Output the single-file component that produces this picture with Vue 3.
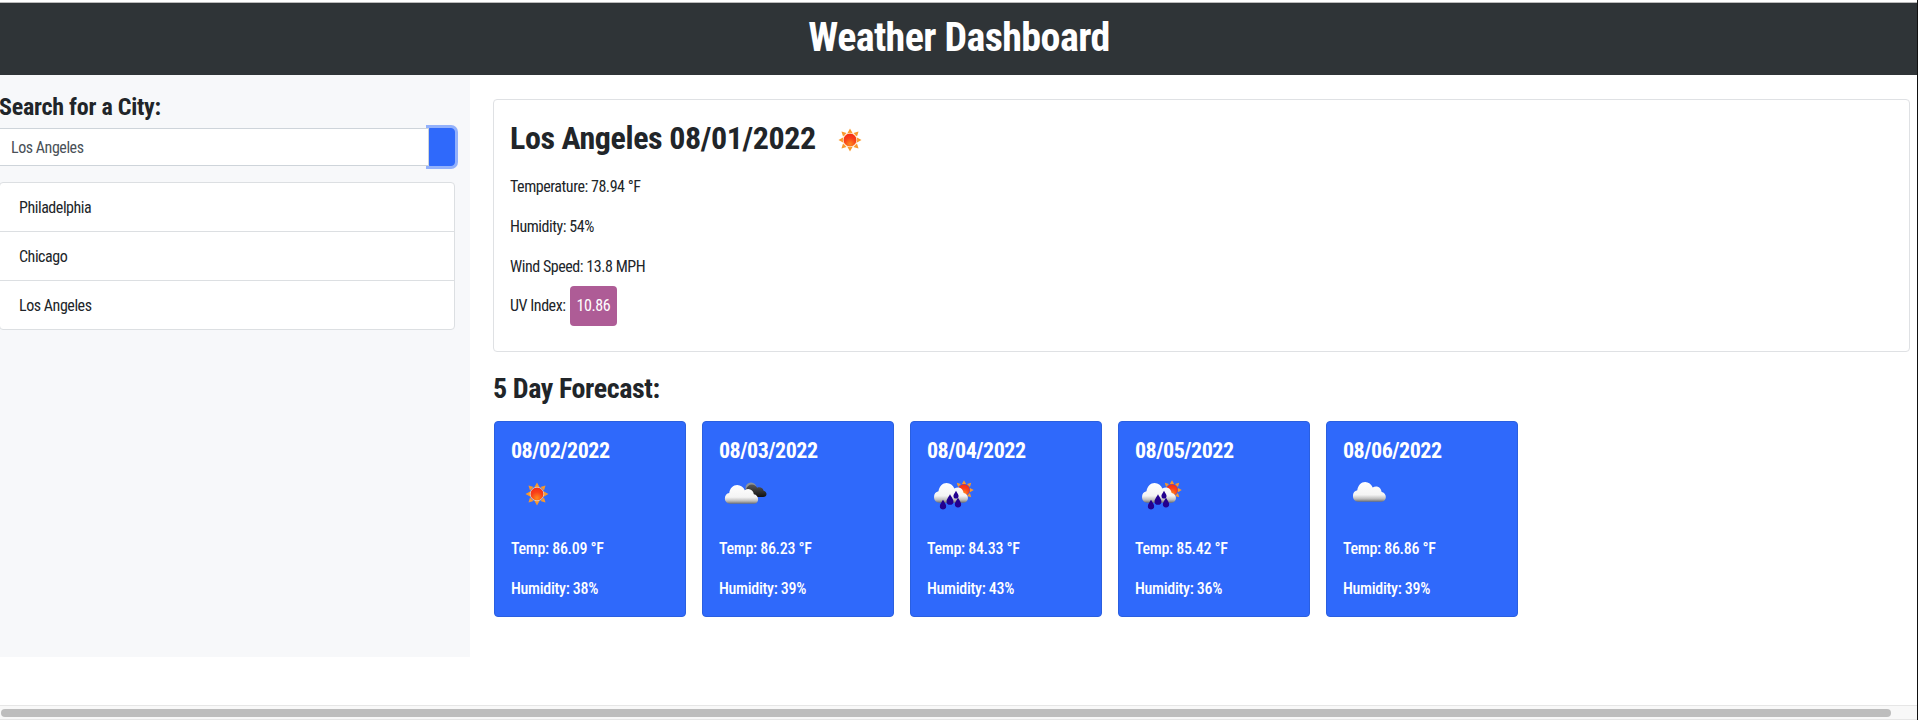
<template>
  <div class="page">
    <div class="top-line"></div>
    <header class="header">
      <h1>Weather Dashboard</h1>
    </header>

    <div class="content">
      <aside class="sidebar">
        <h3 class="search-title">Search for a City:</h3>
        <div class="search">
          <input class="search-input" type="text" value="Los Angeles" />
          <button class="search-btn" type="button" aria-label="Search"></button>
        </div>
        <ul class="history">
          <li v-for="city in cities" :key="city">{{ city }}</li>
        </ul>
      </aside>

      <main class="main">
        <section class="today">
          <div class="today-title">
            <h2>Los Angeles 08/01/2022</h2>
            <svg class="today-icon" viewBox="0 0 50 50"><use href="#w-sun" /></svg>
          </div>
          <p>Temperature: 78.94 °F</p>
          <p>Humidity: 54%</p>
          <p class="wind">Wind Speed: 13.8 MPH</p>
          <p class="uv">UV Index: <span class="uv-badge">10.86</span></p>
        </section>

        <h3 class="forecast-title">5 Day Forecast:</h3>
        <div class="forecast">
          <div v-for="day in days" :key="day.date" class="day">
            <h4>{{ day.date }}</h4>
            <svg class="day-icon" viewBox="0 0 50 50"><use :href="'#w-' + day.icon" /></svg>
            <p>Temp: {{ day.temp }} °F</p>
            <p>Humidity: {{ day.humidity }}%</p>
          </div>
        </div>
      </main>
    </div>

    <div class="scrollbar"><div class="thumb"></div></div>
    <div class="edge"></div>

    <svg class="defs" width="0" height="0">
      <defs>
        <radialGradient id="g-sun" cx="50%" cy="80%" r="80%">
          <stop offset="0" stop-color="#ff8a1c" />
          <stop offset="0.55" stop-color="#f8401a" />
          <stop offset="1" stop-color="#f52a12" />
        </radialGradient>
        <linearGradient id="g-cloud" x1="0" y1="0" x2="0" y2="1">
          <stop offset="0" stop-color="#ffffff" />
          <stop offset="0.65" stop-color="#f4f4f4" />
          <stop offset="0.85" stop-color="#bdbdbd" />
          <stop offset="1" stop-color="#6f6f6f" />
        </linearGradient>
        <linearGradient id="g-dark" x1="0" y1="0" x2="0" y2="1">
          <stop offset="0" stop-color="#5a5a5a" />
          <stop offset="1" stop-color="#111111" />
        </linearGradient>
        <g id="rays" fill="#f9982a">
          <path d="M0-11.500-2.500-7h5z" />
          <path d="M0 11.500-2.500 7h5z" />
          <path d="M-11.500 0-7-2.500v5z" />
          <path d="M11.500 0 7-2.500v5z" />
          <path d="M-8.500-8.500l5 1.500-3.500 3.500z" />
          <path d="M8.500-8.500l-5 1.500 3.500 3.500z" />
          <path d="M-8.500 8.500l5-1.500-3.500-3.500z" />
          <path d="M8.500 8.500l-5-1.500 3.500-3.500z" />
        </g>
        <symbol id="w-sun" viewBox="0 0 50 50">
          <use href="#rays" transform="translate(25 25)" />
          <circle cx="25" cy="25" r="6.800" fill="url(#g-sun)" stroke="#ffe0b0" stroke-width="0.8" />
        </symbol>
        <path id="cloud" d="M8 36c-3.400 0-5.500-2.300-5.500-5.200 0-2.800 1.800-4.800 4.600-5.200C7.800 21 11.300 18 15.500 18c3.600 0 6.500 2 8 5 1-.7 2.300-1 3.600-1 3.100 0 5.400 2 5.900 5 2.600.3 4.500 2.300 4.500 4.700 0 2.300-1.700 4.300-4.500 4.300z" />
        <path id="drop" d="M0-5c2 3.500 3 4.700 3 6.200a3 3 0 0 1-6 0c0-1.500 1-2.700 3-6.200z" />
        <symbol id="w-clouds" viewBox="0 0 50 50">
          <circle cx="31" cy="19" r="5.500" fill="#8d939b" />
          <path d="M27 28c-2.800 0-4.500-1.700-4.500-3.800 0-2 1.500-3.600 3.600-3.800.6-3 3-5 5.800-5 2.300 0 4.300 1.300 5.300 3.300.6-.3 1.300-.4 2-.4 2.300 0 4 1.500 4.500 3.500 1.700.4 2.800 1.700 2.800 3.200 0 1.700-1.300 3-3.300 3z" fill="url(#g-dark)" />
          <use href="#cloud" fill="url(#g-cloud)" transform="translate(2.500 -3) scale(.95 1.050)" />
        </symbol>
        <symbol id="w-rain" viewBox="0 0 50 50">
          <use href="#rays" transform="translate(36 21) scale(.85)" />
          <circle cx="36" cy="21" r="5.800" fill="url(#g-sun)" />
          <use href="#cloud" fill="url(#g-cloud)" transform="translate(3.600 -5.800) scale(.97 1.100)" />
          <g fill="#23008f">
            <use href="#drop" transform="translate(28 26) scale(.85)" />
            <use href="#drop" transform="translate(22 31) scale(1.150)" />
            <use href="#drop" transform="translate(15 36) scale(1.050)" />
            <use href="#drop" transform="translate(30 34) scale(1.050)" />
          </g>
        </symbol>
        <symbol id="w-cloud" viewBox="0 0 50 50">
          <use href="#cloud" fill="url(#g-cloud)" transform="translate(6.600 -6.800) scale(.94 1.100)" />
        </symbol>
      </defs>
    </svg>
  </div>
</template>

<script setup>
const cities = ['Philadelphia', 'Chicago', 'Los Angeles']

const days = [
  { date: '08/02/2022', icon: 'sun', temp: '86.09', humidity: 38 },
  { date: '08/03/2022', icon: 'clouds', temp: '86.23', humidity: 39 },
  { date: '08/04/2022', icon: 'rain', temp: '84.33', humidity: 43 },
  { date: '08/05/2022', icon: 'rain', temp: '85.42', humidity: 36 },
  { date: '08/06/2022', icon: 'cloud', temp: '86.86', humidity: 39 }
]
</script>

<style>
html,
body {
  margin: 0;
  background: #fff;
  overflow: hidden;
}
</style>

<style scoped>
.page {
  position: relative;
  height: 720px;
  overflow: hidden;
  font-family: Roboto, "Liberation Sans", sans-serif;
  font-stretch: 75%;
  font-weight: 400;
  letter-spacing: -0.45px;
  color: #212529;
  font-size: 16px;
}

.top-line {
  height: 3px;
  box-sizing: border-box;
  border-bottom: 1px solid #bbb;
}

.header {
  height: 72px;
  box-sizing: border-box;
  padding-bottom: 4px;
  background: #2f3437;
  display: flex;
  align-items: center;
  justify-content: center;
}

h1 {
  margin: 0;
  color: #fff;
  font-size: 40px;
  font-weight: 700;
  letter-spacing: -0.6px;
}

.content {
  display: flex;
}

.sidebar {
  width: 470px;
  height: 582px;
  box-sizing: border-box;
  flex-shrink: 0;
  background: #f7f8fa;
  padding: 16px 15px 0 0;
}

.search-title {
  margin: 0 0 5px -1px;
  font-size: 24px;
  line-height: 32px;
  font-weight: 700;
  letter-spacing: -0.25px;
}

.search {
  display: flex;
  height: 38px;
}

.search-input {
  position: relative;
  z-index: 1;
  flex: 1;
  min-width: 0;
  margin-left: -1px;
  border: 1px solid #ced4da;
  padding: 0 11px;
  font: inherit;
  font-stretch: 75%;
  letter-spacing: -0.45px;
  color: #495057;
  background: #fff;
  outline: none;
}

.search-btn {
  width: 26px;
  border: 1px solid #2f69fb;
  border-radius: 0 4px 4px 0;
  background: #2f69fb;
  box-shadow: 0 0 0 3px rgba(47, 105, 251, 0.5);
  padding: 0;
}

.history {
  list-style: none;
  margin: 16px 0 0 -1px;
  padding: 0;
  background: #fff;
  border: 1px solid #dcdfe2;
  border-radius: 4px;
}

.history li {
  height: 48px;
  line-height: 50px;
  padding-left: 19px;
}

.history li + li {
  border-top: 1px solid #dcdfe2;
}

.main {
  flex: 1;
  padding: 24px 8px 0 23px;
  min-width: 0;
}

.today {
  height: 253px;
  box-sizing: border-box;
  border: 1px solid #dfe1e4;
  border-radius: 4px;
  padding: 16px;
}

.today-title {
  display: flex;
  align-items: center;
  height: 43px;
  margin-bottom: 16px;
}

h2 {
  margin: 0;
  font-size: 32px;
  font-weight: 700;
  letter-spacing: -0.4px;
}

.today-icon {
  width: 50px;
  height: 50px;
  margin: 5px 0 0 9px;
}

.today p {
  margin: 0 0 16px;
  line-height: 24px;
}

.today p.wind {
  margin-bottom: 7px;
}

.today p.uv {
  margin: 0;
  line-height: 40px;
  display: flex;
  align-items: center;
  gap: 4px;
}

.uv-badge {
  display: inline-block;
  height: 40px;
  padding: 0 7px;
  background: #ae5c96;
  color: #fff;
  border-radius: 4px;
}

.forecast-title {
  margin: 20px 0 0;
  font-size: 28px;
  line-height: 34px;
  font-weight: 700;
  letter-spacing: -0.4px;
}

.forecast {
  display: flex;
  gap: 16px;
  margin-top: 15px;
  padding-left: 1px;
}

.day {
  width: 192px;
  height: 196px;
  box-sizing: border-box;
  background: #2f69fb;
  border: 1px solid #2a5fe0;
  border-radius: 4px;
  padding: 16px;
  color: #fff;
}

h4 {
  margin: 0 0 5px;
  font-size: 22px;
  line-height: 26px;
  font-weight: 700;
  letter-spacing: -0.5px;
}

.day-icon {
  display: block;
  width: 50px;
  height: 50px;
  margin: 0 0 18px 1px;
}

.day p {
  margin: 0 0 16px;
  line-height: 24px;
  font-weight: 500;
  letter-spacing: -0.3px;
}

.scrollbar {
  position: absolute;
  left: 0;
  right: 0;
  top: 705px;
  height: 15px;
  box-sizing: border-box;
  background: #f8f8f8;
  border-top: 1px solid #e6e6e6;
  border-bottom: 1px solid #e6e6e6;
}

.thumb {
  margin: 3px 0 0 1px;
  width: 1890px;
  height: 8px;
  border-radius: 4px;
  background: #bdbdbd;
}

.edge {
  position: absolute;
  right: 0;
  top: 0;
  bottom: 0;
  width: 1px;
  background: #111;
}

.defs {
  position: absolute;
}
</style>
